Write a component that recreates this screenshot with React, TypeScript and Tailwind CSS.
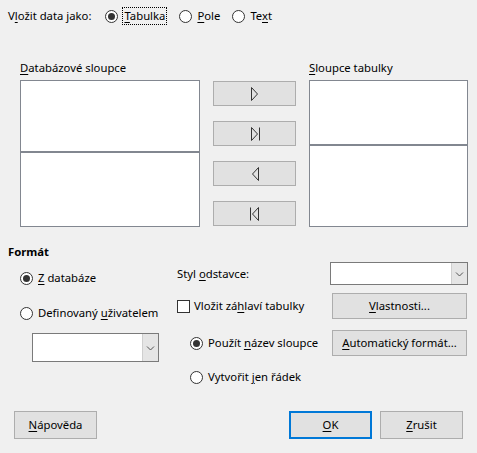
import React from "react";

function U({ children }: { children: React.ReactNode }) {
  return <span className="underline underline-offset-2">{children}</span>;
}

function Radio({ checked = false }: { checked?: boolean }) {
  return (
    <span className="flex h-[13px] w-[13px] shrink-0 items-center justify-center rounded-full border border-[#333333] bg-white">
      {checked && <span className="h-[7px] w-[7px] rounded-full bg-[#333333]" />}
    </span>
  );
}

function Btn({
  children,
  className = "",
  primary = false,
}: {
  children: React.ReactNode;
  className?: string;
  primary?: boolean;
}) {
  return (
    <div
      className={
        "flex items-center justify-center bg-[#e1e1e1] text-[#000] " +
        (primary ? "border-2 border-[#0078d7] " : "border border-[#adadad] ") +
        className
      }
    >
      {children}
    </div>
  );
}

function ArrowIcon({ dir, bar }: { dir: "right" | "left"; bar?: boolean }) {
  return (
    <svg width="14" height="16" viewBox="0 0 14 16" fill="none" stroke="#333" strokeWidth="1">
      {dir === "right" ? (
        <>
          <path d="M3.5 1.5 L9.5 8 L3.5 14.5 Z" />
          {bar && <path d="M11.5 1.5 V14.5" />}
        </>
      ) : (
        <>
          <path d="M10.5 1.5 L4.5 8 L10.5 14.5 Z" />
          {bar && <path d="M2.5 1.5 V14.5" />}
        </>
      )}
    </svg>
  );
}

function Combo({ className = "" }: { className?: string }) {
  return (
    <div className={"flex border border-[#7a7a7a] bg-white " + className}>
      <div className="flex-1" />
      <div className="flex w-[16px] items-center justify-center border-l border-[#cfcfcf] bg-[#e5e5e5]">
        <svg width="9" height="6" viewBox="0 0 9 6" fill="none" stroke="#555" strokeWidth="1">
          <path d="M1 1.5 L4.5 5 L8 1.5" />
        </svg>
      </div>
    </div>
  );
}

export default function App() {
  return (
    <div
      className="flex h-[453px] w-[477px] flex-col bg-[#f0f0f0] text-[11.3px] leading-[16px] text-black"
      style={{ fontFamily: '"Noto Sans", "Open Sans", sans-serif' }}
    >
      {/* top row */}
      <div className="mt-[7px] flex h-[18px] items-center pl-[8px]">
        <span>
          V<U>l</U>ožit data jako:
        </span>
        <div className="ml-[14px] flex items-center">
          <Radio checked />
          <span className="ml-[4px] border border-dotted border-black px-[1px]">
            <U>T</U>abulka
          </span>
        </div>
        <div className="ml-[12px] flex items-center">
          <Radio />
          <span className="ml-[5px]">
            <U>P</U>ole
          </span>
        </div>
        <div className="ml-[12px] flex items-center">
          <Radio />
          <span className="ml-[5px]">
            Te<U>x</U>t
          </span>
        </div>
      </div>

      {/* columns */}
      <div className="mt-[35px] flex pl-[20px]">
        <div className="flex w-[180px] flex-col">
          <span className="h-[16px]">
            <U>D</U>atabázové sloupce
          </span>
          <div className="mt-[4px] flex h-[147px] flex-col border border-[#828790] bg-white">
            <div className="h-[72px] border-b-2 border-[#828790]" />
            <div className="flex-1" />
          </div>
        </div>
        <div className="ml-[13px] mt-[21px] flex w-[83px] flex-col gap-[15px]">
          <Btn className="h-[25px]">
            <ArrowIcon dir="right" />
          </Btn>
          <Btn className="h-[25px]">
            <ArrowIcon dir="right" bar />
          </Btn>
          <Btn className="h-[25px]">
            <ArrowIcon dir="left" />
          </Btn>
          <Btn className="h-[25px]">
            <ArrowIcon dir="left" bar />
          </Btn>
        </div>
        <div className="ml-[13px] flex w-[159px] flex-col">
          <span className="h-[16px]">
            <U>S</U>loupce tabulky
          </span>
          <div className="mt-[4px] flex h-[147px] flex-col border border-[#828790] bg-white">
            <div className="h-[65px] border-b-2 border-[#828790]" />
            <div className="flex-1" />
          </div>
        </div>
      </div>

      {/* format */}
      <div className="mt-[17px] pl-[8px] font-bold">Formát</div>
      <div className="flex">
        <div className="flex w-[177px] flex-col pl-[20px]">
          <div className="mt-[10px] flex h-[16px] items-center">
            <Radio checked />
            <span className="ml-[5px]">
              <U>Z</U> databáze
            </span>
          </div>
          <div className="mt-[19px] flex h-[16px] items-center">
            <Radio />
            <span className="ml-[5px]">
              Definovaný <U>u</U>živatelem
            </span>
          </div>
          <Combo className="ml-[12px] mt-[12px] h-[29px] w-[127px]" />
        </div>
        <div className="flex flex-1 flex-col">
          <div className="mt-[2px] flex items-center">
            <span className="w-[153px]">
              Styl <U>o</U>dstavce:
            </span>
            <Combo className="h-[23px] w-[138px]" />
          </div>
          <div className="mt-[8px] flex items-center">
            <div className="flex w-[155px] items-center">
              <span className="h-[13px] w-[13px] border border-[#333333] bg-white" />
              <span className="ml-[4px]">
                Vložit zá<U>h</U>laví tabulky
              </span>
            </div>
            <Btn className="h-[26px] w-[135px]">
              <U>V</U>lastnosti...
            </Btn>
          </div>
          <div className="mt-[11px] flex items-center">
            <div className="flex w-[155px] items-center pl-[13px]">
              <Radio checked />
              <span className="ml-[5px]">
                Použít <U>n</U>ázev sloupce
              </span>
            </div>
            <Btn className="h-[26px] w-[135px]">
              <U>A</U>utomatický formát...
            </Btn>
          </div>
          <div className="mt-[13px] flex items-center pl-[13px]">
            <Radio />
            <span className="ml-[5px]">
              Vytvořit <U>j</U>en řádek
            </span>
          </div>
        </div>
      </div>

      {/* bottom */}
      <div className="mt-[26px] flex pl-[14px]">
        <Btn className="h-[28px] w-[83px]">
          <U>N</U>ápověda
        </Btn>
        <div className="flex-1" />
        <Btn primary className="h-[28px] w-[83px]">
          <U>O</U>K
        </Btn>
        <Btn className="ml-[8px] mr-[14px] h-[28px] w-[83px]">
          <U>Z</U>rušit
        </Btn>
      </div>
    </div>
  );
}
